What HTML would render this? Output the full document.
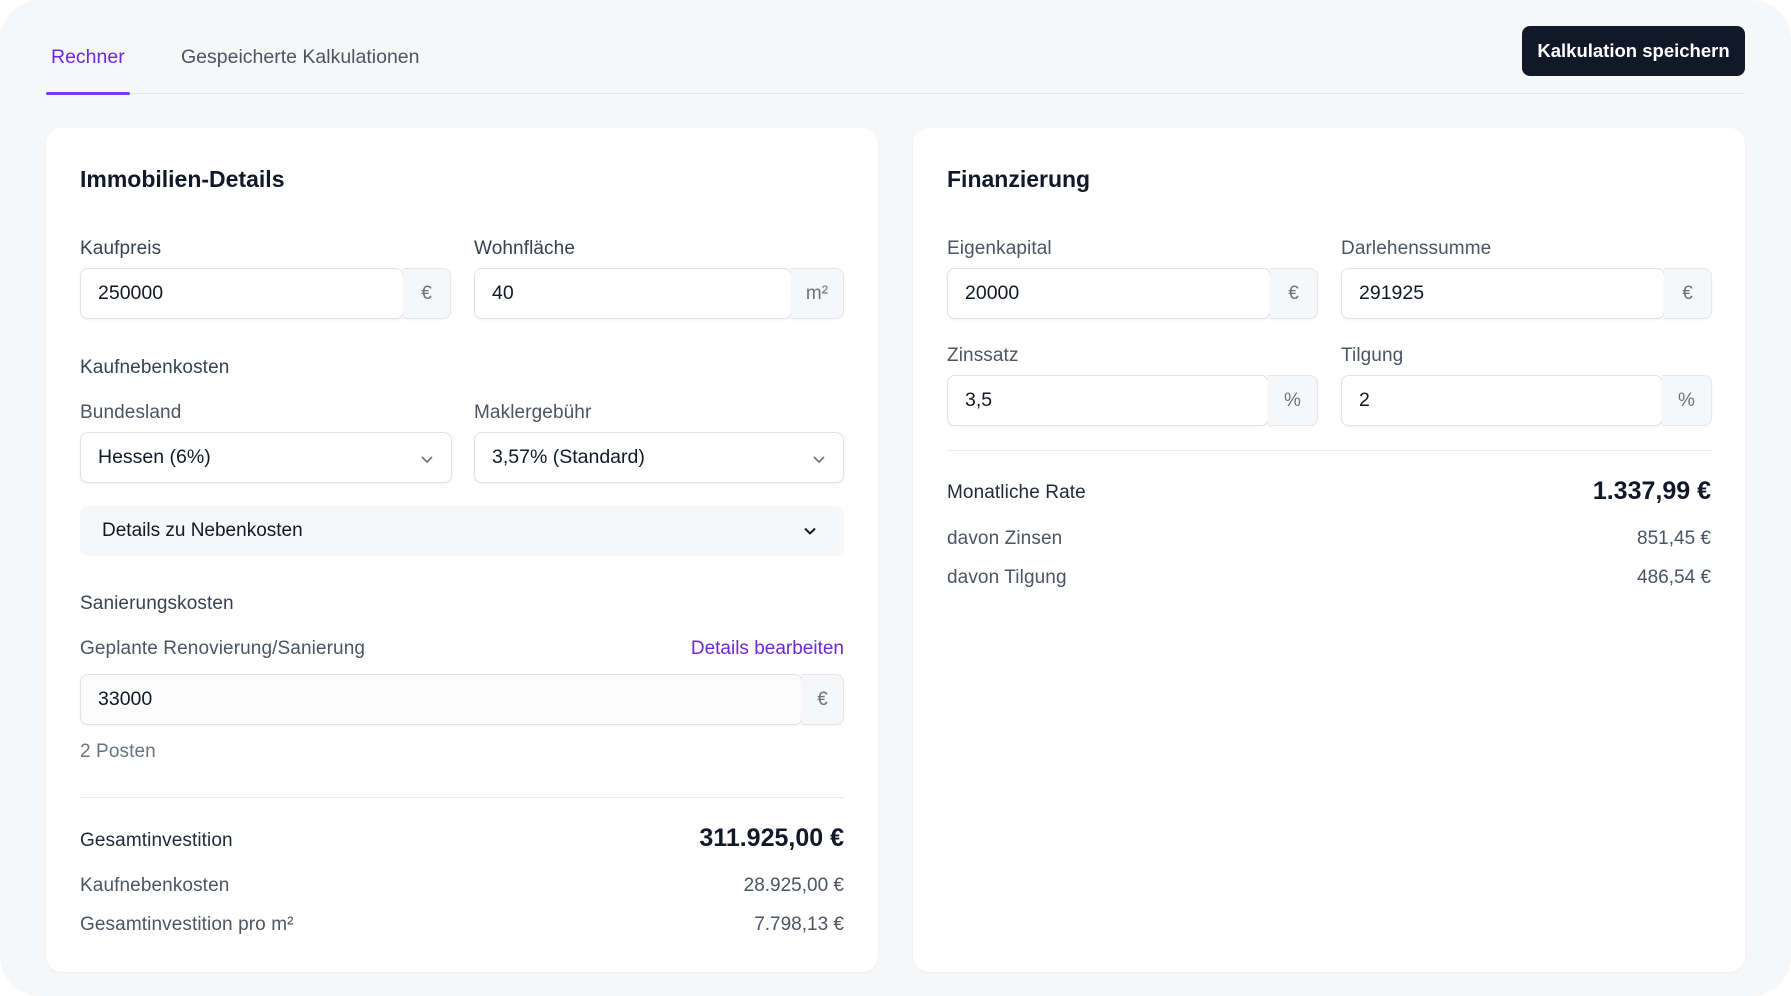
<!DOCTYPE html>
<html><head><meta charset="utf-8"><style>
*{box-sizing:border-box;margin:0;padding:0}
body{width:1791px;height:996px;background:#fff;font-family:"Liberation Sans",sans-serif;color:#111827;position:relative;overflow:hidden}
.wrap{position:absolute;left:0;top:0;width:1791px;height:996px;background:#f6f7f9;border-radius:40px}
.abs{position:absolute;white-space:nowrap}
.tab{font-size:19.5px;top:46px}
.card{position:absolute;top:128px;width:832px;height:844px;background:#fff;border-radius:16px;box-shadow:0 1px 2px rgba(0,0,0,.04)}
h2{position:absolute;font-size:23px;font-weight:600;left:34px;top:38px;color:#111827}
.lbl{position:absolute;font-size:19px;color:#374151;white-space:nowrap;letter-spacing:.1px}
.lbl.g{color:#4b5563}
.inp{position:absolute;height:51px;border:1px solid #dfe2e8;border-radius:8px;background:#fff;box-shadow:0 1px 2px rgba(0,0,0,.06);font-size:19.5px;padding-left:17px;line-height:49px;color:#111827}
.add{position:absolute;height:51px;border:1px solid #e5e7eb;border-left:none;border-radius:0 8px 8px 0;background:#f6f7f9;font-size:19px;color:#6b7280;text-align:center;line-height:49px;box-shadow:0 1px 2px rgba(0,0,0,.04)}
.sel svg{position:absolute;right:16px;top:18px}
.hr{position:absolute;height:1px;background:#e8eaee}
.r{position:absolute;text-align:right;white-space:nowrap}
</style></head><body>
<div class="wrap">
<div class="abs tab" style="left:51px;color:#6d28d9">Rechner</div>
<div class="abs tab" style="left:181px;color:#4b5563">Gespeicherte Kalkulationen</div>
<div class="abs" style="left:46px;top:93px;width:1699px;height:1px;background:#e3e5ea"></div>
<div class="abs" style="left:46px;top:92px;width:84px;height:3px;background:#7c3aed;border-radius:2px"></div>
<div class="abs" style="left:1522px;top:26px;width:223px;height:50px;background:#111827;border-radius:8px;color:#fff;font-size:18.5px;font-weight:600;text-align:center;line-height:50px">Kalkulation speichern</div>

<div class="card" style="left:46px">
<h2>Immobilien-Details</h2>
<div class="lbl" style="left:34px;top:110px">Kaufpreis</div>
<div class="inp" style="left:34px;top:140px;width:324px">250000</div>
<div class="add" style="left:357px;top:140px;width:48px">€</div>
<div class="lbl" style="left:428px;top:110px">Wohnfläche</div>
<div class="inp" style="left:428px;top:140px;width:318px">40</div>
<div class="add" style="left:745px;top:140px;width:53px">m²</div>
<div class="lbl" style="left:34px;top:229px">Kaufnebenkosten</div>
<div class="lbl g" style="left:34px;top:274px">Bundesland</div>
<div class="lbl g" style="left:428px;top:274px">Maklergebühr</div>
<div class="inp sel" style="left:34px;top:304px;width:372px">Hessen (6%)<svg width="16" height="16" viewBox="0 0 16 16"><path d="M3 6l5 5 5-5" fill="none" stroke="#6b7280" stroke-width="1.6"/></svg></div>
<div class="inp sel" style="left:428px;top:304px;width:370px">3,57% (Standard)<svg width="16" height="16" viewBox="0 0 16 16"><path d="M3 6l5 5 5-5" fill="none" stroke="#6b7280" stroke-width="1.6"/></svg></div>
<div class="abs" style="left:34px;top:378px;width:764px;height:50px;background:#f6f7f9;border-radius:8px;font-size:19px;line-height:50px;padding-left:22px">Details zu Nebenkosten<svg style="position:absolute;right:26px;top:17px" width="16" height="16" viewBox="0 0 16 16"><path d="M3 5.5l5 5 5-5" fill="none" stroke="#111827" stroke-width="2"/></svg></div>
<div class="lbl" style="left:34px;top:465px">Sanierungskosten</div>
<div class="lbl g" style="left:34px;top:510px">Geplante Renovierung/Sanierung</div>
<div class="r" style="right:34px;top:510px;font-size:19px;color:#6d28d9">Details bearbeiten</div>
<div class="inp" style="left:34px;top:546px;width:723px;background:#fbfbfc">33000</div>
<div class="add" style="left:756px;top:546px;width:42px">€</div>
<div class="lbl" style="left:34px;top:613px;color:#6b7280">2 Posten</div>
<div class="hr" style="left:34px;top:669px;width:764px"></div>
<div class="lbl" style="left:34px;top:702px;color:#1f2937">Gesamtinvestition</div>
<div class="r" style="right:34px;top:696px;font-size:25px;font-weight:600">311.925,00 €</div>
<div class="lbl g" style="left:34px;top:747px">Kaufnebenkosten</div>
<div class="r" style="right:34px;top:747px;font-size:19px;color:#4b5563">28.925,00 €</div>
<div class="lbl g" style="left:34px;top:786px">Gesamtinvestition pro m²</div>
<div class="r" style="right:34px;top:786px;font-size:19px;color:#4b5563">7.798,13 €</div>
</div>

<div class="card" style="left:913px">
<h2>Finanzierung</h2>
<div class="lbl g" style="left:34px;top:110px">Eigenkapital</div>
<div class="inp" style="left:34px;top:140px;width:324px">20000</div>
<div class="add" style="left:357px;top:140px;width:48px">€</div>
<div class="lbl g" style="left:428px;top:110px">Darlehenssumme</div>
<div class="inp" style="left:428px;top:140px;width:324px">291925</div>
<div class="add" style="left:751px;top:140px;width:48px">€</div>
<div class="lbl g" style="left:34px;top:217px">Zinssatz</div>
<div class="inp" style="left:34px;top:247px;width:322px">3,5</div>
<div class="add" style="left:355px;top:247px;width:50px">%</div>
<div class="lbl g" style="left:428px;top:217px">Tilgung</div>
<div class="inp" style="left:428px;top:247px;width:322px">2</div>
<div class="add" style="left:749px;top:247px;width:50px">%</div>
<div class="hr" style="left:34px;top:322px;width:765px"></div>
<div class="lbl" style="left:34px;top:354px;color:#1f2937">Monatliche Rate</div>
<div class="r" style="right:34px;top:349px;font-size:25px;font-weight:600">1.337,99 €</div>
<div class="lbl g" style="left:34px;top:400px">davon Zinsen</div>
<div class="r" style="right:34px;top:400px;font-size:19px;color:#4b5563">851,45 €</div>
<div class="lbl g" style="left:34px;top:439px">davon Tilgung</div>
<div class="r" style="right:34px;top:439px;font-size:19px;color:#4b5563">486,54 €</div>
</div>
</div>
</body></html>
